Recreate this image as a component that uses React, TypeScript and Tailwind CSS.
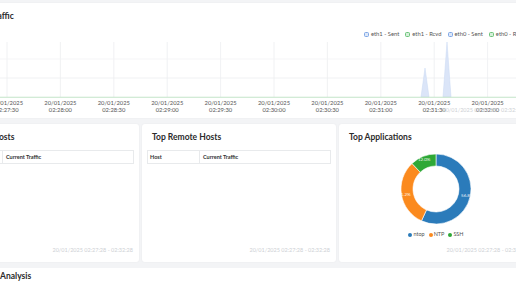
import React from "react";

const gridX = Array.from({ length: 11 }, (_, i) => 7 + 53.4 * (i - 1));
const times = ["02:27:00", "02:27:30", "02:28:00", "02:28:30", "02:29:00", "02:29:30", "02:30:00", "02:30:30", "02:31:00", "02:31:30", "02:32:00"];
const OFF = 55; // page x -> card x

function TrafficChart() {
  const top = 38;
  const y = (py: number) => py - top;
  return (
    <svg width={588} height={77} className="block" style={{ fontFamily: "Lato, sans-serif" }}>
      {gridX.map((gx, i) => (
        <line key={i} x1={gx + OFF} x2={gx + OFF} y1={y(42)} y2={y(97)} stroke="#eceef0" strokeWidth={0.8} />
      ))}
      <line x1={0} x2={588} y1={y(59)} y2={y(59)} stroke="#f2f3f5" strokeWidth={0.8} />
      <line x1={0} x2={588} y1={y(78)} y2={y(78)} stroke="#eceef0" strokeWidth={0.8} />
      <polygon
        points={`${421 + OFF},${y(97)} ${425 + OFF},${y(68)} ${429 + OFF},${y(97)}`}
        fill="#dbe5f8"
        stroke="#c9d8f3"
        strokeWidth={0.5}
      />
      <polygon
        points={`${443 + OFF},${y(97)} ${447 + OFF},${y(42)} ${451 + OFF},${y(97)}`}
        fill="#dbe5f8"
        stroke="#c9d8f3"
        strokeWidth={0.5}
      />
      <line x1={0} x2={588} y1={y(97.3)} y2={y(97.3)} stroke="#c3e4c8" strokeWidth={1.1} />
      {gridX.map((gx, i) => (
        <g key={"l" + i} fontSize={5.8} fill="#555" textAnchor="middle">
          <text x={gx + OFF} y={y(105.2)}>20/01/2025</text>
          <text x={gx + OFF} y={y(112.4)}>{times[i]}</text>
        </g>
      ))}
    </svg>
  );
}

function LegendBox({ color, fill, label }: { color: string; fill: string; label: string }) {
  return (
    <div className="flex items-center gap-[2px] whitespace-nowrap">
      <span className="inline-block w-[5px] h-[5px] rounded-[1.5px] border" style={{ borderColor: color, backgroundColor: fill }} />
      <span>{label}</span>
    </div>
  );
}

function Footer({ className = "" }: { className?: string }) {
  return (
    <span className={"absolute text-[5.5px] leading-none text-[#cdd0d4] whitespace-nowrap " + className}>
      20/01/2025 02:27:28 - 02:32:28
    </span>
  );
}

function HostTable() {
  return (
    <div className="mx-[5px] mt-[7px] flex h-[14px] border border-[#e8eaec] text-[5.5px] font-bold text-[#333]">
      <div className="w-[52px] border-r border-[#e8eaec] flex items-center pl-[2px]">Host</div>
      <div className="flex-1 flex items-center pl-[3px]">Current Traffic</div>
    </div>
  );
}

function Donut() {
  const cx = 50, cy = 40, ro = 35, ri = 23;
  const data = [
    { v: 56.8, c: "#2b7bba" },
    { v: 31.2, c: "#fb8a1e" },
    { v: 12.0, c: "#2ea836" },
  ];
  let acc = 0;
  const arcs = data.map((d) => {
    const a0 = (acc / 100) * Math.PI * 2;
    acc += d.v;
    const a1 = (acc / 100) * Math.PI * 2;
    const p = (r: number, a: number) => [cx + r * Math.sin(a), cy - r * Math.cos(a)];
    const [x0, y0] = p(ro, a0);
    const [x1, y1] = p(ro, a1);
    const [x2, y2] = p(ri, a1);
    const [x3, y3] = p(ri, a0);
    const large = a1 - a0 > Math.PI ? 1 : 0;
    const am = (a0 + a1) / 2;
    const [lx, ly] = p(ro - 3, am);
    return {
      d: `M${x0},${y0} A${ro},${ro} 0 ${large} 1 ${x1},${y1} L${x2},${y2} A${ri},${ri} 0 ${large} 0 ${x3},${y3} Z`,
      c: d.c,
      lx,
      ly,
      label: d.v.toFixed(1) + "%",
    };
  });
  return (
    <svg width={100} height={80} className="block" style={{ fontFamily: "Lato, sans-serif" }}>
      {arcs.map((a, i) => (
        <path key={i} d={a.d} fill={a.c} stroke="#fff" strokeWidth={0.6} />
      ))}
      {arcs.map((a, i) => (
        <text key={"t" + i} x={a.lx} y={a.ly + 1.5} fontSize={4.5} fill="#fff" textAnchor="middle" opacity={0.9}>
          {a.label}
        </text>
      ))}
    </svg>
  );
}

const card = "relative bg-white rounded-[3px] shadow-[0_0_2px_rgba(0,0,0,0.05)]";
const title = "px-[10px] text-[8.5px] leading-[11px] font-bold text-[#2b2b2b] whitespace-nowrap";

export default function App() {
  return (
    <div className="relative w-[516px] h-[289px] overflow-hidden bg-[#f3f4f6]" style={{ fontFamily: "Lato, sans-serif" }}>
      <div className="ml-[-55px] w-[588px] pt-[3px] flex flex-col gap-[6px]">
        {/* Traffic card */}
        <div className={card + " h-[115px]"}>
          <div className={title + " pt-[8px]"}>Network Traffic</div>
          <div className="mt-[8px] pl-[419px] flex gap-[6px] text-[5.8px] leading-[8px] text-[#555]">
            <LegendBox color="#7fa7e6" fill="#dce7f8" label="eth1 - Sent" />
            <LegendBox color="#6cc47a" fill="#d5efd9" label="eth1 - Rcvd" />
            <LegendBox color="#7fa7e6" fill="#dce7f8" label="eth0 - Sent" />
            <LegendBox color="#6cc47a" fill="#d5efd9" label="eth0 - Rcvd" />
          </div>
          <TrafficChart />
          <Footer className="right-[10px] bottom-[5px]" />
        </div>

        {/* Row of three cards */}
        <div className="grid grid-cols-3 gap-[3px]">
          <div className={card + " h-[138px]"}>
            <div className={title + " pt-[8px]"}>Top Local Hosts</div>
            <HostTable />
            <Footer className="right-[6px] bottom-[9px]" />
          </div>
          <div className={card + " h-[138px]"}>
            <div className={title + " pt-[8px]"}>Top Remote Hosts</div>
            <HostTable />
            <Footer className="right-[6px] bottom-[9px]" />
          </div>
          <div className={card + " h-[138px]"}>
            <div className={title + " pt-[8px]"}>Top Applications</div>
            <div className="flex flex-col items-center mt-[6px]">
              <Donut />
              <div className="flex gap-[4px] text-[5.5px] leading-[7px] text-[#555] mt-[2px]">
                <span className="flex items-center gap-[1px]"><span className="w-[4px] h-[4px] rounded-full bg-[#2b7bba]" />ntop</span>
                <span className="flex items-center gap-[1px]"><span className="w-[4px] h-[4px] rounded-full bg-[#fb8a1e]" />NTP</span>
                <span className="flex items-center gap-[1px]"><span className="w-[4px] h-[4px] rounded-full bg-[#2ea836]" />SSH</span>
              </div>
            </div>
            <Footer className="right-[6px] bottom-[9px]" />
          </div>
        </div>

        {/* Analysis card */}
        <div className="h-[40px] bg-white rounded-[3px]">
          <div className={title + " pt-[3px]"}>Application Analysis</div>
        </div>
      </div>
    </div>
  );
}
